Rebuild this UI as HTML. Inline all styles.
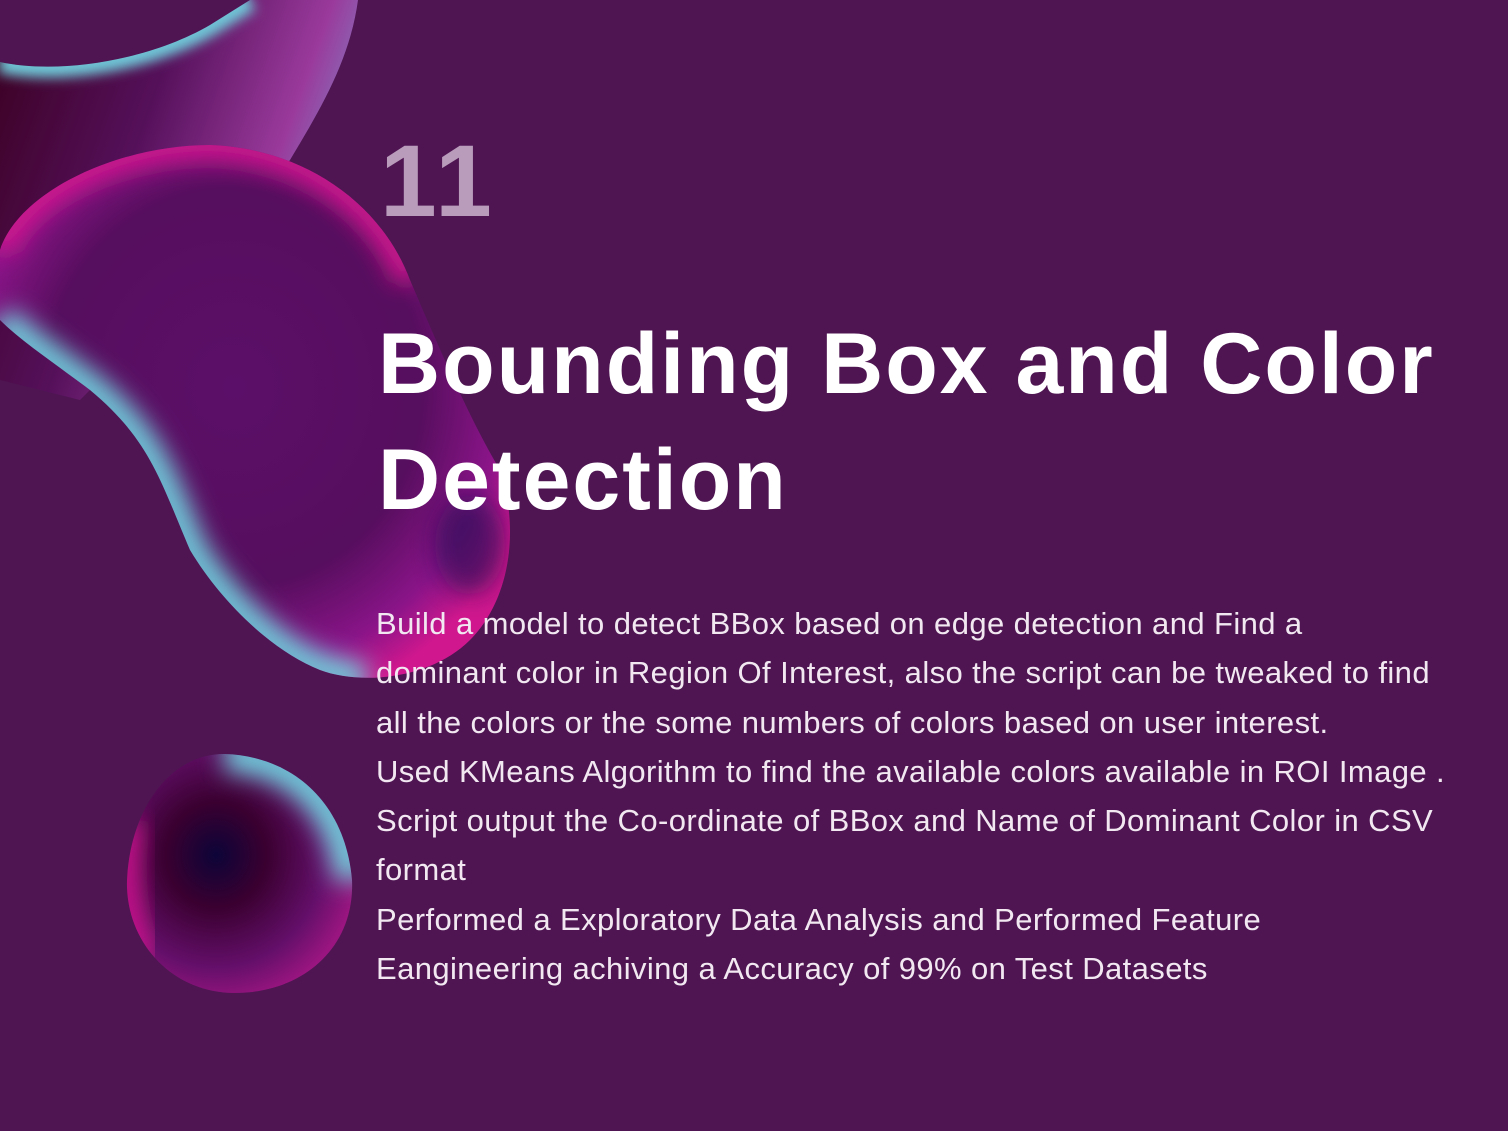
<!DOCTYPE html>
<html><head><meta charset="utf-8"><style>
html,body{margin:0;padding:0}
body{width:1508px;height:1131px;background:#4e1552;position:relative;overflow:hidden;font-family:"Liberation Sans",sans-serif}
svg{position:absolute;left:0;top:0}
.num{position:absolute;left:380px;top:130px;font-size:102px;font-weight:bold;color:#b99bbb;line-height:1;letter-spacing:4px}
.title{position:absolute;left:378px;top:306px;font-size:86px;font-weight:bold;color:#fff;line-height:116px;letter-spacing:2px;white-space:nowrap}
.body{position:absolute;left:376px;top:599px;font-size:31px;color:#f2e8f2;line-height:49.3px;white-space:nowrap;letter-spacing:0.4px}
</style></head><body>
<svg width="1508" height="1131" viewBox="0 0 1508 1131">
<defs>
<linearGradient id="g1" x1="0" y1="0" x2="1" y2="0.4">
<stop offset="0" stop-color="#3a0020"/><stop offset="0.45" stop-color="#55105a"/><stop offset="0.8" stop-color="#9a3a9c"/><stop offset="1" stop-color="#7f8ac8"/></linearGradient>
<radialGradient id="g2" cx="0.45" cy="0.45" r="0.6">
<stop offset="0" stop-color="#5c0f68"/><stop offset="0.6" stop-color="#560e5e"/><stop offset="0.85" stop-color="#8a1488"/><stop offset="1" stop-color="#d0178e"/></radialGradient>
<radialGradient id="g3" cx="0.4" cy="0.42" r="0.6">
<stop offset="0" stop-color="#0d0438"/><stop offset="0.35" stop-color="#3a0030"/><stop offset="0.75" stop-color="#640f6a"/><stop offset="1" stop-color="#9a1580"/></radialGradient>
<filter id="b" x="-50%" y="-50%" width="200%" height="200%"><feGaussianBlur stdDeviation="12"/></filter>
<filter id="b2" x="-50%" y="-50%" width="200%" height="200%"><feGaussianBlur stdDeviation="6"/></filter>
<clipPath id="c1"><path d="M0,62 C60,75 150,60 210,25 L250,0 L358,0 C350,60 320,110 290,160 L180,300 L80,400 L0,380 Z"/></clipPath>
<clipPath id="c2"><path d="M0,250 C20,190 120,145 210,145 C300,148 380,200 410,280 C440,350 470,420 500,470 C520,530 510,600 470,640 C430,680 360,685 320,670 C270,650 220,600 190,550 C160,480 150,440 90,390 C50,360 20,340 0,320 Z"/></clipPath>
<clipPath id="c3"><path d="M225,754 C290,756 345,800 352,880 C355,950 300,993 235,993 C170,993 125,940 127,880 C130,810 170,753 225,754 Z"/></clipPath>
</defs>
<g clip-path="url(#c1)">
<rect x="0" y="0" width="360" height="400" fill="url(#g1)"/>
<path d="M0,62 C60,75 150,60 210,25 L250,0" stroke="#6fc8d8" stroke-width="22" fill="none" filter="url(#b2)"/>
</g>
<g clip-path="url(#c2)">
<rect x="0" y="140" width="520" height="550" fill="url(#g2)"/>
<path d="M0,250 C20,190 120,145 210,145 C300,148 380,200 410,280" stroke="#d0178e" stroke-width="30" fill="none" filter="url(#b)"/>
<path d="M0,320 C20,340 50,360 90,390 C150,440 160,480 190,550 C220,600 270,650 320,670 L365,682" stroke="#6fc8d8" stroke-width="34" fill="none" filter="url(#b)"/>
<ellipse cx="470" cy="545" rx="35" ry="50" fill="#1a0850" opacity="0.6" filter="url(#b)"/>
</g>
<g clip-path="url(#c3)">
<rect x="120" y="750" width="240" height="250" fill="url(#g3)"/>
<path d="M225,754 C290,756 345,800 352,880" stroke="#6fc8d8" stroke-width="36" fill="none" filter="url(#b)"/>
<path d="M130,820 C122,870 125,920 145,960" stroke="#d0178e" stroke-width="26" fill="none" filter="url(#b)"/>
</g>
</svg>
<div class="num">11</div>
<div class="title">Bounding Box and Color<br>Detection</div>
<div class="body">Build a model to detect BBox based on edge detection and Find a<br>dominant color in Region Of Interest, also the script can be tweaked to find<br>all the colors or the some numbers of colors based on user interest.<br>Used KMeans Algorithm to find the available colors available in ROI Image .<br>Script output the Co-ordinate of BBox and Name of Dominant Color in CSV<br>format<br>Performed a Exploratory Data Analysis and Performed Feature<br>Eangineering achiving a Accuracy of 99% on Test Datasets</div>
</body></html>
